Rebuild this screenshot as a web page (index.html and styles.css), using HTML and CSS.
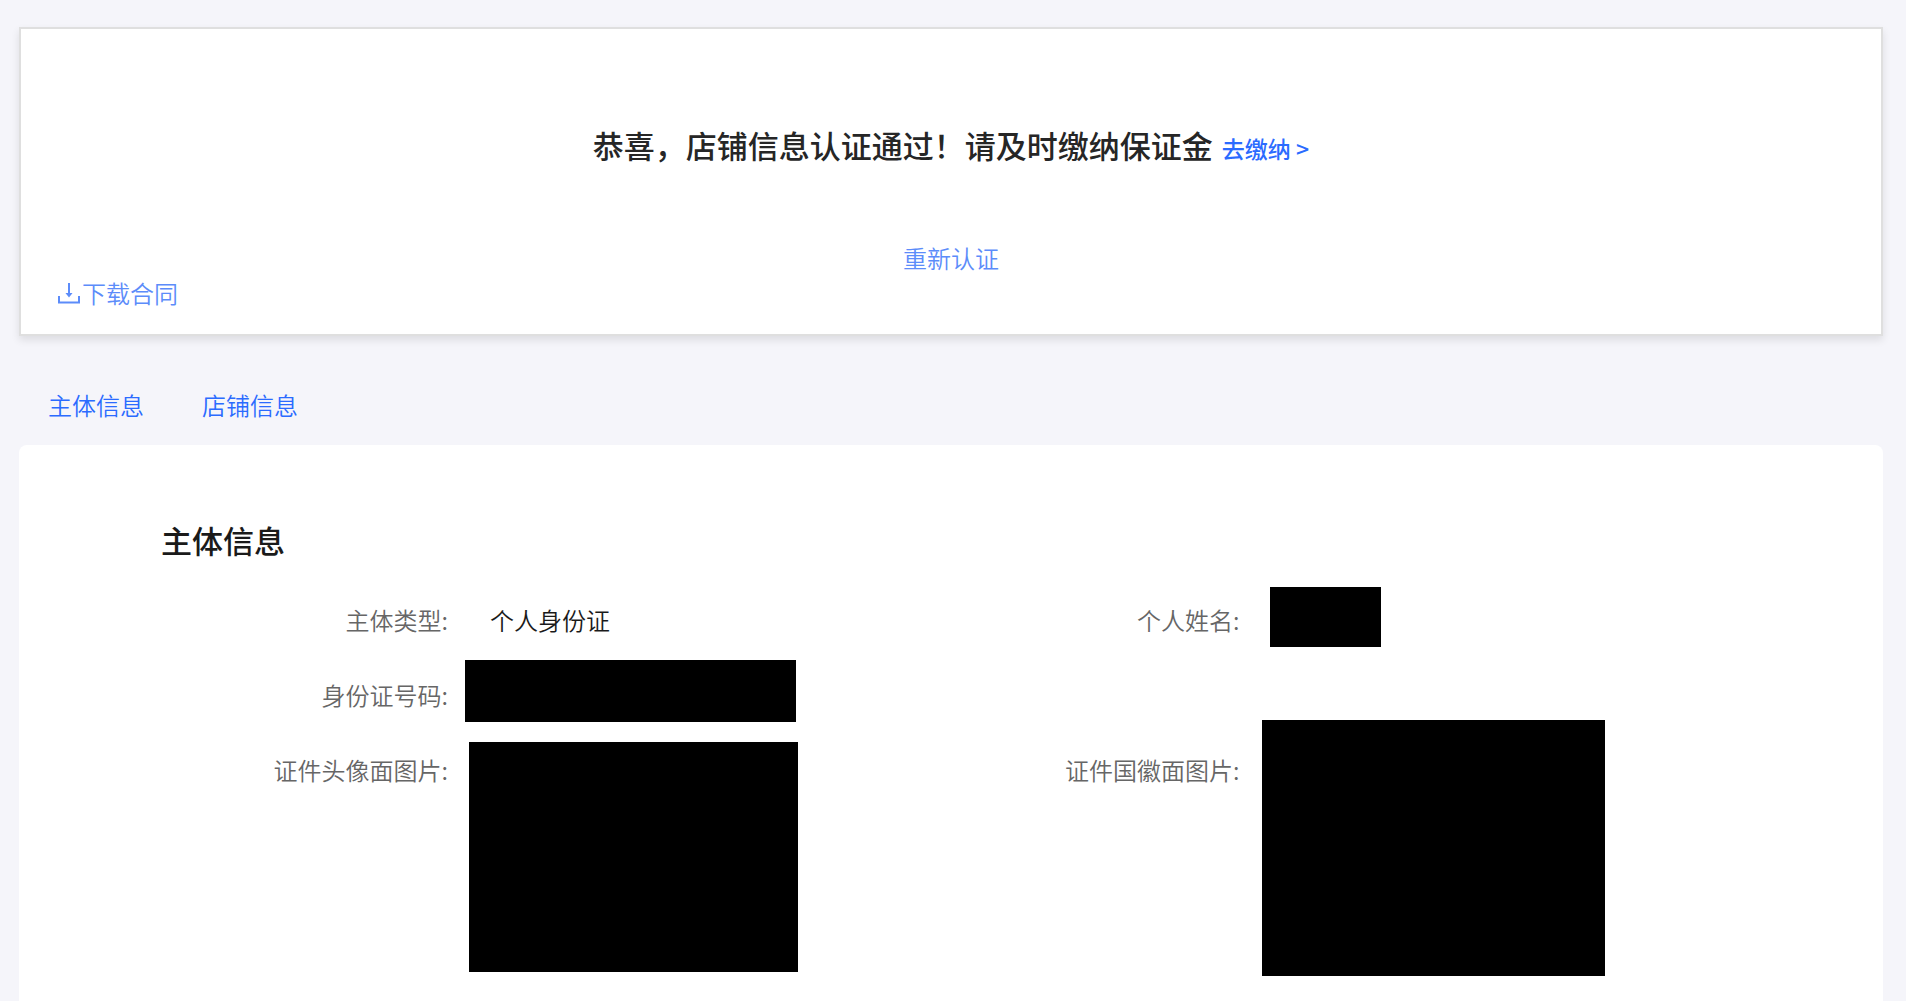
FILE: index.html
```html
<!DOCTYPE html>
<html lang="zh-CN">
<head>
    <meta charset="UTF-8">
    <meta name="viewport" content="width=device-width, initial-scale=1.0">
    <title>店铺信息认证</title>
    <link rel="stylesheet" href="styles.css">
</head>
<body>
    <div class="page">
        <section class="status-card">
            <h1 class="status-title">恭喜，店铺信息认证通过！请及时缴纳保证金 <a class="pay-link" href="#">去缴纳 &gt;</a></h1>
            <a class="retry-link" href="#">重新认证</a>
            <a class="download-link" href="#">
                <svg class="download-icon" viewBox="0 0 22 22" aria-hidden="true">
                    <path d="M1 14v6.500h20V14" fill="none" stroke="currentColor" stroke-width="2"/>
                    <path d="M11 1v12" fill="none" stroke="currentColor" stroke-width="2"/>
                    <path d="M7.500 11h7L11 15.500z" fill="currentColor"/>
                </svg>下载合同</a>
        </section>

        <nav class="tabs">
            <a href="#subject">主体信息</a>
            <a href="#shop">店铺信息</a>
        </nav>

        <section class="panel" id="subject">
            <h2 class="panel-title">主体信息</h2>
            <div class="columns">
                <dl class="column">
                    <div class="row">
                        <dt>主体类型:</dt>
                        <dd class="text">个人身份证</dd>
                    </div>
                    <div class="row">
                        <dt>身份证号码:</dt>
                        <dd class="mask mask-number"></dd>
                    </div>
                    <div class="row">
                        <dt>证件头像面图片:</dt>
                        <dd class="mask mask-front"></dd>
                    </div>
                </dl>
                <dl class="column">
                    <div class="row">
                        <dt>个人姓名:</dt>
                        <dd class="mask mask-name"></dd>
                    </div>
                    <div class="row"></div>
                    <div class="row">
                        <dt>证件国徽面图片:</dt>
                        <dd class="mask mask-back"></dd>
                    </div>
                </dl>
            </div>
        </section>
    </div>
</body>
</html>
```
FILE: styles.css
```css
* {
    box-sizing: border-box;
}
body {
    margin: 0;
    background-color: #f5f5fa;
    font-family: "Noto Sans CJK SC", sans-serif;
    font-size: 24px;
    font-weight: 350;
    line-height: 36px;
    color: #1a1a1a;
}
a {
    color: #2b6bff;
    text-decoration: none;
}
.page {
    min-height: 100vh;
    padding: 27px 23px 0 19px;
    display: flex;
    flex-direction: column;
}

/* certification result */
.status-card {
    display: flex;
    flex-direction: column;
    padding: 92px 37px 24px;
    background: #fff;
    border: 2px solid #dfdfdf;
    box-shadow: 0 4px 8px rgba(0, 0, 0, 0.1);
}
.status-title {
    margin: 0 0 68px;
    font-size: 31px;
    font-weight: 500;
    line-height: 48px;
    text-align: center;
    color: #262626;
}
.pay-link {
    margin-left: 2px;
    font-size: 23px;
}
.retry-link {
    align-self: center;
    color: #5c8cfa;
}
.download-link {
    display: flex;
    align-items: center;
    align-self: flex-start;
    gap: 2px;
    line-height: 34px;
    color: #5c8cfa;
}
.download-icon {
    width: 22px;
    height: 22px;
}

.tabs {
    display: flex;
    gap: 58px;
    padding: 51px 29px 22px;
}

/* detail panel */
.panel {
    flex: 1;
    padding: 71px 139px 0 142px;
    background: #fff;
    border-radius: 8px 8px 0 0;
}
.panel-title {
    margin: 0 0 20px;
    font-size: 31px;
    font-weight: 500;
    line-height: 48px;
}
.columns {
    display: grid;
    grid-template-columns: 1fr 1fr;
}
.column {
    margin: 0;
}
.row {
    display: flex;
    align-items: flex-start;
    height: 75px;
}
.row dt {
    width: 287px;
    padding-top: 18px;
    text-align: right;
    color: #666;
}
.row dd {
    margin: 0;
}
.row .text {
    padding: 18px 0 0 42px;
}

/* hidden personal data */
.row .mask {
    background: #000;
}
.row .mask-number {
    width: 331px;
    height: 62px;
    margin: 1px 0 0 17px;
}
.row .mask-front {
    width: 329px;
    height: 230px;
    margin: 8px 0 0 21px;
}
.row .mask-name {
    width: 111px;
    height: 60px;
    margin: 3px 0 0 30px;
}
.row .mask-back {
    width: 343px;
    height: 256px;
    margin: -14px 0 0 22px;
}
```
